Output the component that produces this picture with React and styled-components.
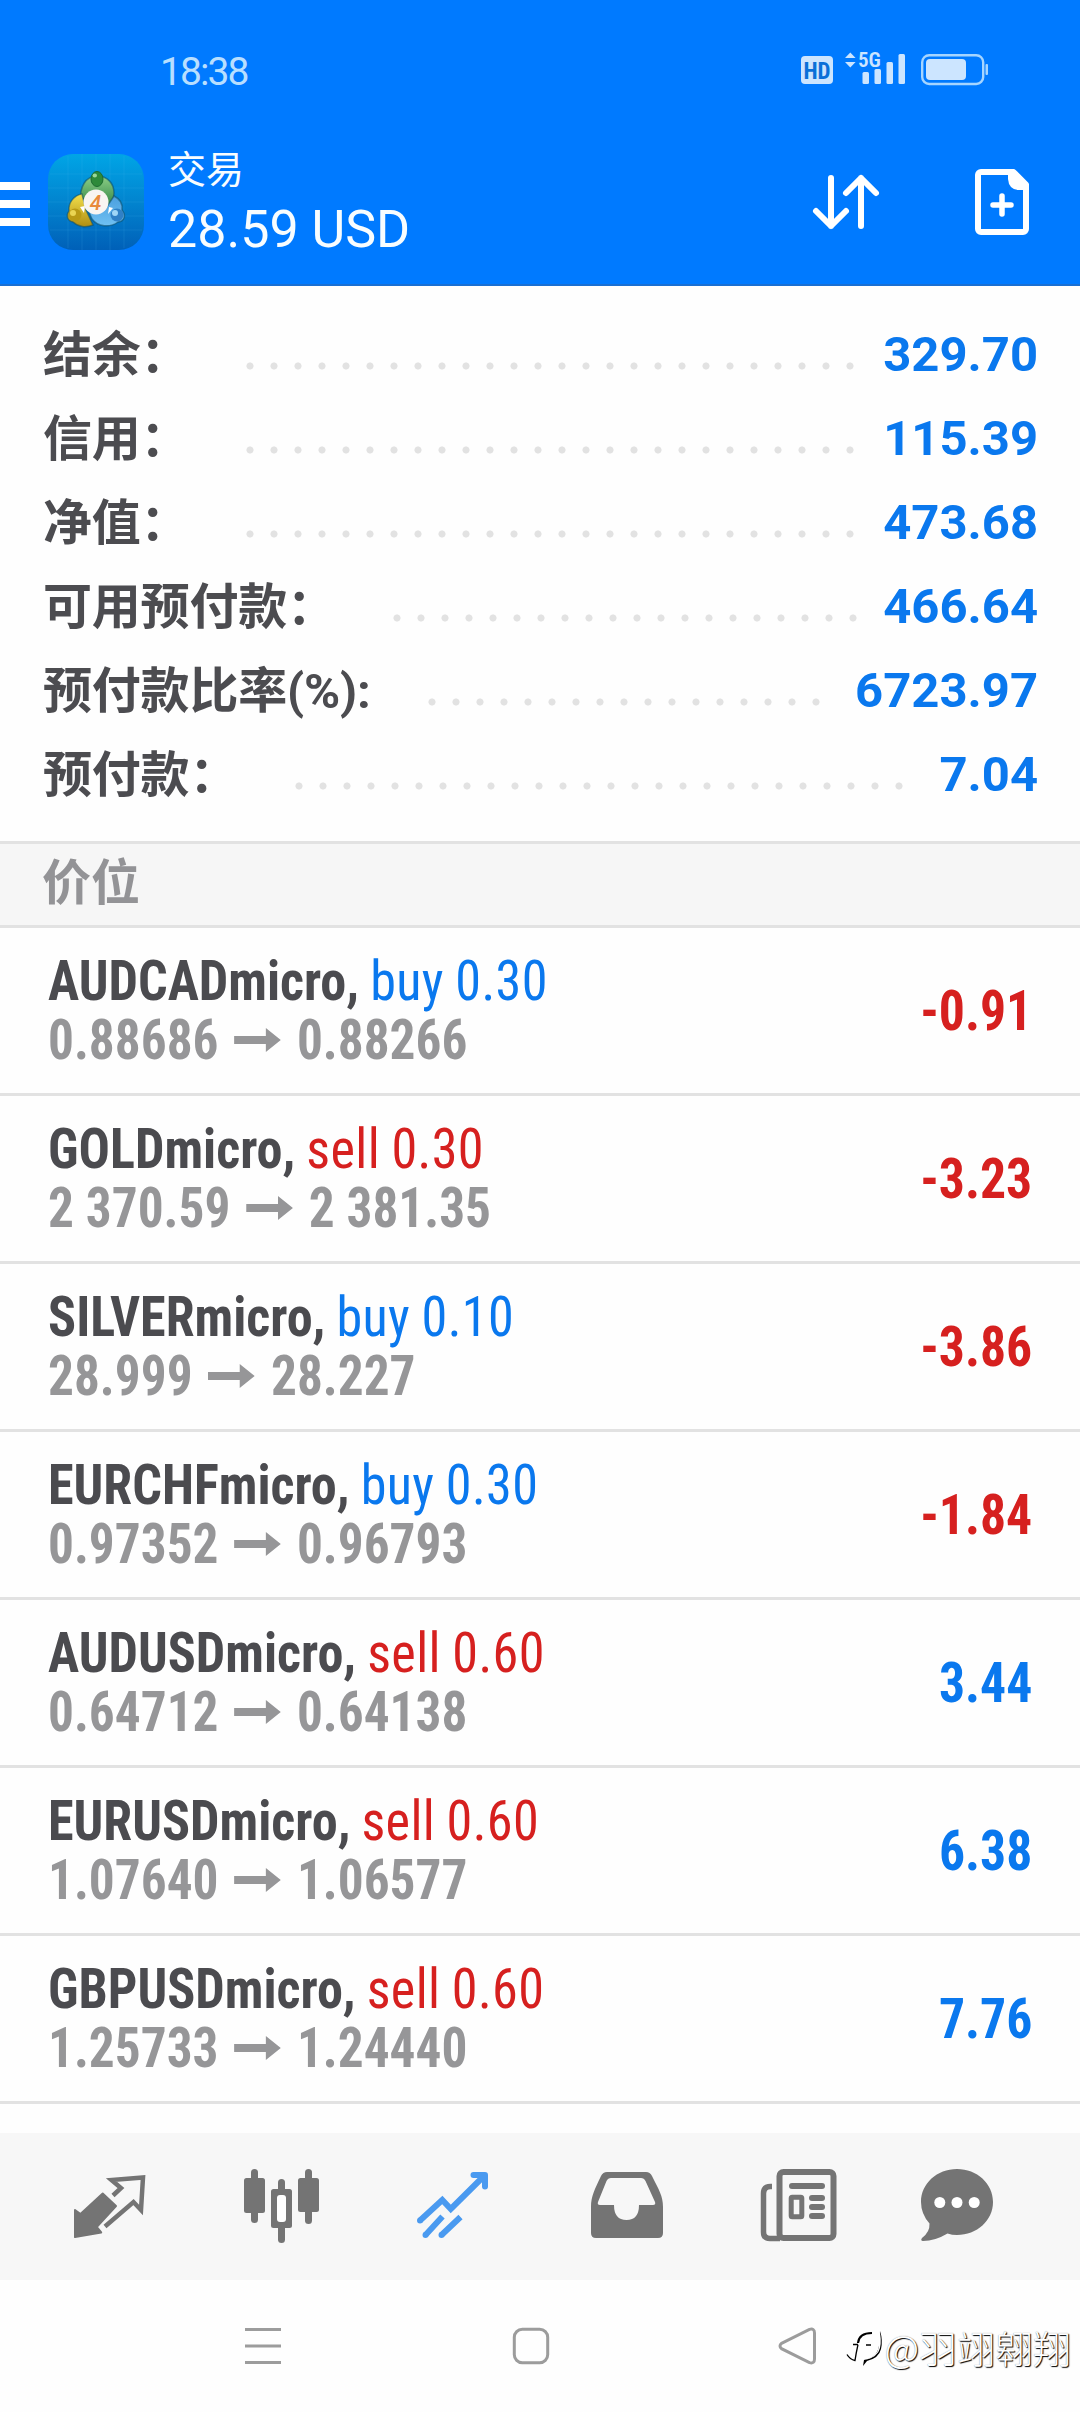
import React from 'react';
import styled, { createGlobalStyle } from 'styled-components';

const BLUE = '#0a78ee';
const RED = '#d6201f';
const GREY = '#747474';
const DOT_STEP = 24;

const summary = [
  { label: '结余：', value: '329.70', dots: 26 },
  { label: '信用：', value: '115.39', dots: 26 },
  { label: '净值：', value: '473.68', dots: 26 },
  { label: '可用预付款：', value: '466.64', dots: 20 },
  { label: '预付款比率(%):', value: '6723.97', dots: 17 },
  { label: '预付款：', value: '7.04', dots: 26 },
];

const positions = [
  { symbol: 'AUDCADmicro', side: 'buy', volume: '0.30', open: '0.88686', current: '0.88266', profit: '-0.91' },
  { symbol: 'GOLDmicro', side: 'sell', volume: '0.30', open: '2 370.59', current: '2 381.35', profit: '-3.23' },
  { symbol: 'SILVERmicro', side: 'buy', volume: '0.10', open: '28.999', current: '28.227', profit: '-3.86' },
  { symbol: 'EURCHFmicro', side: 'buy', volume: '0.30', open: '0.97352', current: '0.96793', profit: '-1.84' },
  { symbol: 'AUDUSDmicro', side: 'sell', volume: '0.60', open: '0.64712', current: '0.64138', profit: '3.44' },
  { symbol: 'EURUSDmicro', side: 'sell', volume: '0.60', open: '1.07640', current: '1.06577', profit: '6.38' },
  { symbol: 'GBPUSDmicro', side: 'sell', volume: '0.60', open: '1.25733', current: '1.24440', profit: '7.76' },
];

export default function App() {
  return (
    <Screen>
      <GlobalStyle />
      <Header>
        <StatusBar>
          <Clock>18:38</Clock>
          <StatusIcons />
        </StatusBar>
        <TitleBar>
          <MenuButton><i /><i /><i /></MenuButton>
          <AppLogo />
          <Titles>
            <Title>交易</Title>
            <Amount>28.59 USD</Amount>
          </Titles>
          <SortIcon />
          <NewOrderIcon />
        </TitleBar>
      </Header>
      <Summary>
        {summary.map(item => (
          <SummaryRow key={item.label}>
            <SummaryLabel>{item.label}</SummaryLabel>
            <Dots $count={item.dots} />
            <SummaryValue>{item.value}</SummaryValue>
          </SummaryRow>
        ))}
      </Summary>
      <SectionHeader>价位</SectionHeader>
      <Positions>
        {positions.map(p => <Position key={p.symbol} {...p} />)}
      </Positions>
      <TabBar>
        <QuotesIcon />
        <ChartIcon />
        <TradeIcon />
        <HistoryIcon />
        <NewsIcon />
        <ChatIcon />
      </TabBar>
      <NavBar>
        <NavIcon viewBox="0 0 40 40">
          <path d="M2 3.5h36M2 20h36M2 36.5h36" />
        </NavIcon>
        <NavIcon viewBox="0 0 40 40">
          <rect x="3.3" y="3.3" width="33.4" height="33.4" rx="8" />
        </NavIcon>
        <NavIcon viewBox="0 0 40 40">
          <path d="M2.5 17.3 30.5 3.4Q35.5 2 35.5 7V33Q35.5 38 30.5 36.6L2.5 22.7Q-.5 20 2.5 17.3Z" />
        </NavIcon>
        <Watermark>
          <WatermarkLogo />
          @羽翊翱翔
        </Watermark>
      </NavBar>
    </Screen>
  );
}

function Position({ symbol, side, volume, open, current, profit }) {
  return (
    <PositionRow>
      <Details>
        <Line>{symbol}, <Side $side={side}>{side} {volume}</Side></Line>
        <Prices>
          {open}
          <Arrow viewBox="0 0 50 24">
            <path d="M0 8h34V0l16 12-16 12v-8H0z" />
          </Arrow>
          {current}
        </Prices>
      </Details>
      <Profit $loss={profit.startsWith('-')}>{profit}</Profit>
    </PositionRow>
  );
}

function StatusIcons() {
  return (
    <svg width="190" height="50" viewBox="800 41 190 50" fill="#cce5ff">
      <rect x="801" y="56" width="32" height="28" rx="4" />
      <HdText x="817" y="78.5" textAnchor="middle">HD</HdText>
      <path d="M845 58l5.3-5.5 5.3 5.5zM845 62h10.600l-5.300 5.500z" />
      <NetworkText x="858" y="67">5G</NetworkText>
      <rect x="862.5" y="72" width="6.5" height="12" rx="1.5" />
      <rect x="874.5" y="69" width="6.5" height="15" rx="1.5" />
      <rect x="886.5" y="62" width="6.5" height="22" rx="1.5" />
      <rect x="898.5" y="54" width="6.5" height="30" rx="1.5" />
      <rect x="922.2" y="55.2" width="61" height="28.8" rx="7" fill="none" stroke="#a6d5ff" strokeWidth="2.4" />
      <rect x="926" y="59" width="40" height="21" rx="4" />
      <rect x="985.5" y="64" width="2.5" height="11" rx="1" fill="#a6d5ff" />
    </svg>
  );
}

function AppLogo() {
  return (
    <LogoSvg viewBox="0 0 96 96">
      <defs>
        <linearGradient id="logoBg" x1="0" y1="0" x2="0" y2="1">
          <stop offset="0" stopColor="#00a5e6" />
          <stop offset=".5" stopColor="#0284cf" />
          <stop offset="1" stopColor="#0060b8" />
        </linearGradient>
        <linearGradient id="logoGreen" x1="0" y1="0" x2="0" y2="1">
          <stop offset="0" stopColor="#8dcf86" />
          <stop offset="1" stopColor="#237a3c" />
        </linearGradient>
        <linearGradient id="logoYellow" x1="0" y1="0" x2="0" y2="1">
          <stop offset="0" stopColor="#f3e04c" />
          <stop offset="1" stopColor="#b08e12" />
        </linearGradient>
        <linearGradient id="logoBlue" x1="0" y1="0" x2="0" y2="1">
          <stop offset="0" stopColor="#4a9fdf" />
          <stop offset="1" stopColor="#6fc0f2" />
        </linearGradient>
      </defs>
      <rect width="96" height="96" rx="25" fill="url(#logoBg)" />
      <path
        d="M20 2v92M34 0v96M48 0v96M62 0v96M76 2v92M2 20h92M0 34h96M0 48h96M0 62h96M2 76h92"
        stroke="#4fc4f5"
        strokeOpacity=".15"
      />
      <g stroke="#0c4a63" strokeOpacity=".55" strokeWidth="1.5">
        <path d="M49 22c11 0 17 8 17 17 0 8-4 14-10 18l-6-14-8-2-9 6c-2-14 5-25 16-25z" fill="url(#logoGreen)" />
        <path d="M34 40c-8 1-14 9-13 17-3 4-2 10 4 11 5 5 13 6 20 3L38 56z" fill="url(#logoYellow)" />
        <path d="M66 42c6 3 9 8 8 14 4 5 3 11-4 12-8 6-20 5-26-3l-4-9 18-2z" fill="url(#logoBlue)" />
      </g>
      <path d="M32 53l5-1-1 7zM61 53l4 1-5 6z" fill="#fff" />
      <ellipse cx="49" cy="25" rx="6" ry="7.5" fill="#2e8a3a" stroke="#1c6a30" />
      <ellipse cx="46.8" cy="21.5" rx="2.2" ry="2" fill="#9ad79a" />
      <circle cx="27" cy="61" r="6.5" fill="#b99a14" />
      <circle cx="25" cy="59" r="3" fill="#ead552" />
      <circle cx="69" cy="61" r="6.5" fill="#2f80c6" />
      <circle cx="67" cy="59" r="3" fill="#9fd6f7" />
      <circle cx="48" cy="48" r="12.5" fill="#f8f5f2" />
      <LogoText x="47.5" y="55.500" textAnchor="middle">4</LogoText>
    </LogoSvg>
  );
}

function SortIcon() {
  return (
    <ActionSvg viewBox="0 0 72 72" $gap={84}>
      <path d="M21 12v48M6 45l15 15 15-15M51 60V12M36 27l15-15 15 15" />
    </ActionSvg>
  );
}

function NewOrderIcon() {
  return (
    <ActionSvg viewBox="0 0 72 72" $gap={0}>
      <path d="M15 6H47.500L60 18.500V63a3 3 0 0 1-3 3H15a3 3 0 0 1-3-3V9a3 3 0 0 1 3-3z" />
      <path d="M42 7v6q1 11 11 11H61V18L49 6z" fill="#fff" stroke="none" />
      <path d="M27 39h18M36 30v18" strokeWidth="5.5" />
    </ActionSvg>
  );
}

function QuotesIcon() {
  return (
    <TabSvg viewBox="0 0 84 84">
      <path d="M8 46l5.5 4L35.7 29.5 49 42 29.7 63l4.500 5.500L8 73z" stroke={GREY} strokeWidth="2" strokeLinejoin="round" />
      <path d="M46 31.5l8-7.500-9.500-8L76 13.500 74 46l-7.500-8L38 62.500" fill="none" stroke={GREY} strokeWidth="4.5" />
    </TabSvg>
  );
}

function ChartIcon() {
  return (
    <TabSvg viewBox="0 0 84 84">
      <rect x="4" y="14" width="21" height="35" rx="2.5" />
      <rect x="11" y="5" width="7" height="54" rx="3.5" />
      <rect x="31" y="25" width="21" height="39" rx="2.5" />
      <rect x="38" y="15" width="7" height="64" rx="3.5" />
      <rect x="37" y="31" width="9" height="27" rx="3" fill="#fff" />
      <rect x="58" y="14" width="21" height="34" rx="2.5" />
      <rect x="65" y="5" width="7" height="55" rx="3.5" />
    </TabSvg>
  );
}

function TradeIcon() {
  return (
    <TabSvg viewBox="0 0 84 84">
      <g fill="none" stroke="#4a9af0" strokeWidth="6">
        <path d="M8 56.5l22.300-20.500 8.500 9L73 11" />
        <path d="M8 56.5h0M13.500 71h0M29.500 71h0" strokeLinecap="round" />
        <path d="M61.5 11H73V22.500" strokeLinejoin="round" strokeLinecap="round" />
        <path d="M13.5 71l17-18.500M29.500 71l19-18" />
      </g>
    </TabSvg>
  );
}

function HistoryIcon() {
  return (
    <TabSvg viewBox="0 0 84 84">
      <path d="M22 8h39q4 0 6 4c7 14 11 20 11 31v26q0 5-5 5H11q-5 0-5-5V43c0-11 4-18 10-31q2-4 6-4z" />
      <path d="M26 14h30q3 0 4.500 3l9.500 21q1 3-2 3H54q0 15-12.500 15T29 41H15q-3 0-2-3l8.500-21q1.500-3 4.500-3z" fill="#f7f7f7" />
    </TabSvg>
  );
}

function NewsIcon() {
  return (
    <TabSvg viewBox="0 0 84 84">
      <rect x="22.5" y="8" width="54" height="66" rx="4" fill="none" stroke={GREY} strokeWidth="6" />
      <path d="M15 22.5h-1.500q-7 0-7 7V68q0 6.500 6.500 6.500h10" fill="none" stroke={GREY} strokeWidth="5.5" />
      <rect x="32" y="19" width="36" height="6" rx="3" />
      <rect x="34.2" y="33.2" width="10.6" height="19.6" rx="1" fill="none" stroke={GREY} strokeWidth="5" />
      <rect x="52" y="31" width="16" height="6" rx="3" />
      <rect x="52" y="40" width="16" height="6" rx="3" />
      <rect x="52" y="49" width="16" height="6" rx="3" />
    </TabSvg>
  );
}

function ChatIcon() {
  return (
    <LastTabSvg viewBox="0 0 84 84">
      <path d="M42 5c20 0 36 14.500 36 33S62 71 42 71q-5 0-9.500-1.500Q20 77 8 77q-3-.5-1-3 8-6 7.500-14.500Q6 50 6 38C6 19.500 22 5 42 5z" />
      <g fill="#fff">
        <circle cx="24.8" cy="38.5" r="5.5" />
        <circle cx="42" cy="38.5" r="5.5" />
        <circle cx="59.2" cy="38.5" r="5.5" />
      </g>
    </LastTabSvg>
  );
}

function WatermarkLogo() {
  return (
    <svg width="40" height="40" viewBox="0 0 40 40" fill="none">
      <path d="M14 16q1-10 14-10" stroke="#000" strokeWidth="2.2" />
      <path d="M9 17.5h5M22 18h5M14 17.500q-2 9-3 16-5-1-8-6" stroke="#000" strokeWidth="1.3" />
      <path d="M36 4q3 9 1 18t-14 12l-4 5 1-6q13-2 15-14z" fill="#000" />
      <path d="M35 3q3 9 1 18t-15 12q13-4 14-14z" fill="#fff" />
    </svg>
  );
}

const GlobalStyle = createGlobalStyle`
  body {
    margin: 0;
    background: #fff;
    font-family: Roboto, "Noto Sans CJK SC", sans-serif;
  }
`;

const Screen = styled.div`
  width: 1080px;
  height: 2412px;
  display: flex;
  flex-direction: column;
  overflow: hidden;
  background: #fefefe;
`;

const Header = styled.header`
  box-sizing: border-box;
  height: 286px;
  background: #007aff;
  border-bottom: 2px solid #1a6fd2;
`;

const StatusBar = styled.div`
  box-sizing: border-box;
  height: 122px;
  padding: 41px 90px 0 160px;
  display: flex;
  justify-content: space-between;
  align-items: flex-start;
`;

const Clock = styled.div`
  padding-top: 8px;
  font-size: 39px;
  line-height: 46px;
  letter-spacing: -1.9px;
  color: #b8dfff;
`;

const HdText = styled.text`
  font: 700 23px "Roboto Condensed", Roboto, sans-serif;
  fill: #0a70d8;
`;

const NetworkText = styled.text`
  font: 600 21px "Roboto Condensed", Roboto, sans-serif;
`;

const TitleBar = styled.div`
  height: 160px;
  display: flex;
  align-items: center;
  padding-right: 42px;
`;

const MenuButton = styled.div`
  display: flex;
  flex-direction: column;
  gap: 10px;
  margin: 4px 18px 0 0;

  i {
    width: 30px;
    height: 8px;
    background: #fff;
  }
`;

const LogoSvg = styled.svg`
  width: 96px;
  height: 96px;
`;

const LogoText = styled.text`
  font: italic 500 21px Roboto, sans-serif;
  fill: #e88a3c;
`;

const Titles = styled.div`
  flex: 1;
  padding: 8px 0 0 24px;
  color: #f8fdff;
`;

const Title = styled.div`
  font-size: 38px;
  line-height: 48px;
`;

const Amount = styled.div`
  font-size: 52px;
  line-height: 72px;
`;

const ActionSvg = styled.svg`
  width: 72px;
  height: 72px;
  margin-right: ${props => props.$gap}px;
  fill: none;
  stroke: #fff;
  stroke-width: 6px;
  stroke-linecap: round;
  stroke-linejoin: round;
`;

const Summary = styled.div`
  padding: 26px 42px 25px 43px;
`;

const SummaryRow = styled.div`
  height: 84px;
  display: flex;
  align-items: center;
  font-size: 49px;
  line-height: 84px;
  font-weight: 700;
`;

const SummaryLabel = styled.div`
  padding-top: 3px;
  color: #4c4c50;
  letter-spacing: -0.2px;
`;

const Dots = styled.div`
  width: ${props => props.$count * DOT_STEP}px;
  height: 24px;
  margin: 24px 0 0 49px;
  background: radial-gradient(circle, #e2e2e2 3.2px, transparent 3.9px) 0 0 / ${DOT_STEP}px 24px;
`;

const SummaryValue = styled.div`
  margin-left: auto;
  padding-top: 1px;
  color: ${BLUE};
`;

const SectionHeader = styled.div`
  height: 81px;
  padding-left: 42px;
  border-top: 3px solid #e2e2e2;
  border-bottom: 3px solid #e2e2e2;
  background: #f6f6f6;
  color: #939396;
  font-size: 49px;
  line-height: 79px;
  font-weight: 700;
`;

const Positions = styled.div`
  height: 1205px;
`;

const PositionRow = styled.div`
  height: 165px;
  padding: 0 48px;
  display: flex;
  justify-content: space-between;
  align-items: center;
  border-bottom: 3px solid #e2e2e2;
  font-family: "Roboto Condensed", Roboto, sans-serif;
  font-stretch: 75%;
  font-size: 55px;
  font-weight: 700;
`;

const Details = styled.div`
  line-height: 59px;
  white-space: nowrap;
`;

const Line = styled.div`
  color: #4b4b4f;
  word-spacing: -1px;
  transform: scaleX(0.948);
  transform-origin: left;
`;

const Side = styled.span`
  font-weight: 400;
  letter-spacing: 0.4px;
  color: ${props => (props.$side === 'buy' ? BLUE : RED)};
`;

const Prices = styled.div`
  display: flex;
  align-items: center;
  color: #969698;
  transform: scaleX(0.933);
  transform-origin: left;
`;

const Arrow = styled.svg`
  width: 53px;
  height: 24px;
  margin: 0 15.5px;
  fill: currentColor;
`;

const Profit = styled.div`
  color: ${props => (props.$loss ? RED : BLUE)};
  transform: scaleX(0.94);
  transform-origin: right;
`;

const TabBar = styled.nav`
  box-sizing: border-box;
  height: 147px;
  padding: 31px 0 0 67px;
  display: flex;
  gap: 88.6px;
  background: #f7f7f7;
`;

const TabSvg = styled.svg`
  width: 84px;
  height: 84px;
  flex: none;
  fill: ${GREY};
`;

const LastTabSvg = styled(TabSvg)`
  margin-left: -15px;
`;

const NavBar = styled.div`
  position: relative;
  height: 132px;
  padding-left: 243px;
  display: flex;
  align-items: center;
  gap: 228px;
`;

const NavIcon = styled.svg`
  width: 40px;
  height: 40px;
  flex: none;
  overflow: visible;
  fill: none;
  stroke: #9c9c9c;
  stroke-width: 3px;
`;

const Watermark = styled.div`
  position: absolute;
  right: 9px;
  top: 44px;
  display: flex;
  align-items: center;
  font: 300 38px/46px "Noto Sans CJK SC", sans-serif;
  color: #fff;
  text-shadow: 1px 1px 1px #000, 0 0 1px #888;
`;
